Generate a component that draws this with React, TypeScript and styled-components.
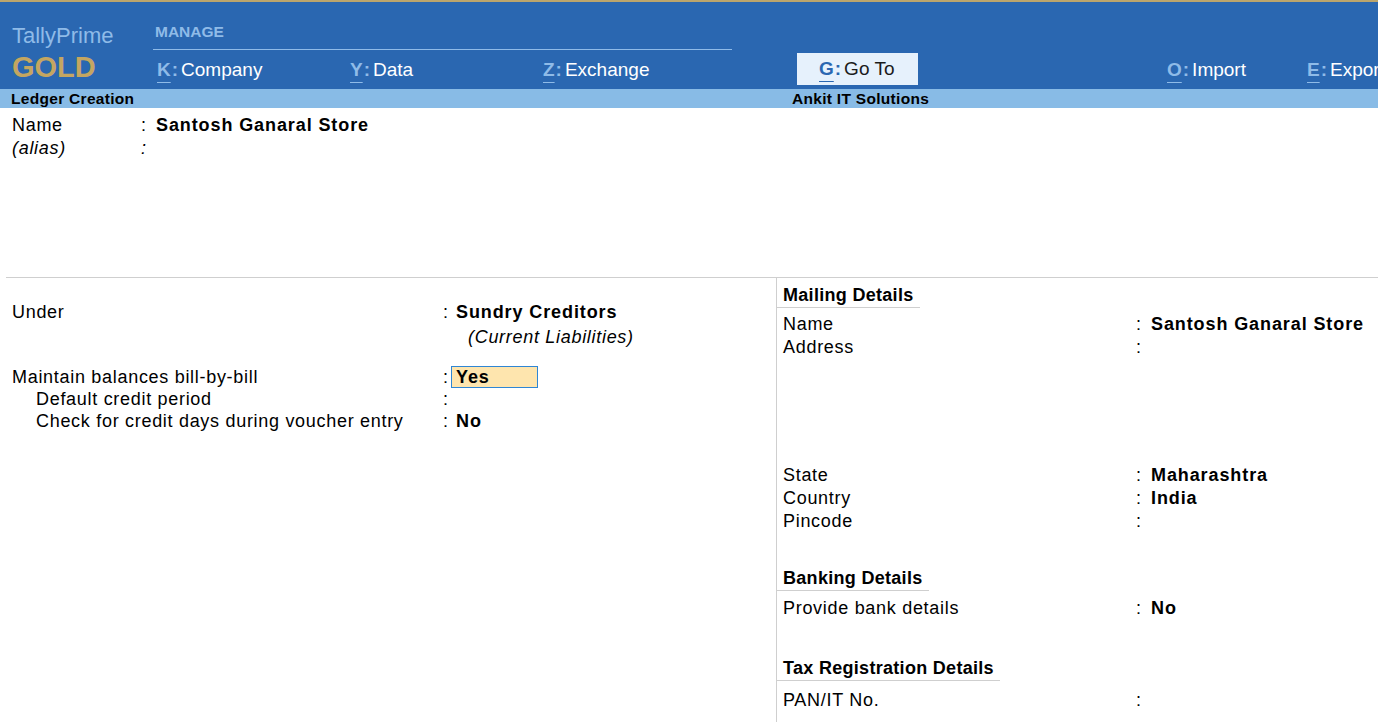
import React from "react";
import styled, { createGlobalStyle } from "styled-components";

const Global = createGlobalStyle`
  html, body { margin: 0; padding: 0; overflow: hidden; background: #fff; }
  body { font-family: "Liberation Sans", Arial, sans-serif; color: #000; }
`;

const Page = styled.div`
  width: 1378px;
  height: 722px;
  overflow: hidden;
  display: flex;
  flex-direction: column;
  background: #fff;
`;

const GoldStripe = styled.div`
  height: 2px;
  background: #bba56c;
  flex: none;
`;

const Header = styled.header`
  height: 87px;
  flex: none;
  background: #2a67b1;
  display: flex;
  white-space: nowrap;
  overflow: hidden;
`;

const Brand = styled.div`
  width: 141px;
  padding: 22px 0 0 12px;
  flex: none;
`;

const BrandName = styled.div`
  font-size: 22px;
  line-height: 24px;
  color: #8fbbe8;
`;

const BrandEdition = styled.div`
  margin-top: 2px;
  font-size: 29px;
  line-height: 34px;
  font-weight: bold;
  color: #c4a661;
`;

const Menu = styled.nav`
  display: flex;
  align-items: flex-end;
`;

const MenuGroup = styled.div`
  width: 579px;
  display: flex;
  flex-direction: column;
`;

const GroupLabel = styled.div`
  padding: 20px 0 7px 2px;
  font-size: 15.5px;
  line-height: 20px;
  font-weight: bold;
  color: #8fbbe8;
  border-bottom: 1px solid #8fbbe8;
`;

const GroupItems = styled.div`
  display: flex;
`;

const MenuItem = styled.div<{ $w: number; $ml?: number; $active?: boolean }>`
  width: ${(p) => p.$w}px;
  margin-left: ${(p) => p.$ml ?? 0}px;
  height: ${(p) => (p.$active ? 32 : 39)}px;
  margin-bottom: ${(p) => (p.$active ? 4 : 0)}px;
  padding-left: ${(p) => (p.$active ? 22 : 4)}px;
  box-sizing: border-box;
  display: flex;
  align-items: center;
  flex: none;
  background: ${(p) => (p.$active ? "#e6f1fc" : "transparent")};
  font-size: 19px;
`;

const Key = styled.span<{ $active?: boolean }>`
  font-weight: bold;
  color: ${(p) => (p.$active ? "#2a67b1" : "#8fbbe8")};
`;

const KeyLetter = styled.span`
  text-decoration: underline;
  text-underline-offset: 6px;
  text-decoration-thickness: 1px;
`;

const KeyColon = styled.span`
  margin: 0 3px 0 1px;
`;

const ItemLabel = styled.span<{ $active?: boolean }>`
  color: ${(p) => (p.$active ? "#1b1b1b" : "#fff")};
`;

const TitleBar = styled.div`
  height: 19px;
  flex: none;
  background: #88bbe6;
  display: flex;
  align-items: center;
  font-size: 15.5px;
  font-weight: bold;
  letter-spacing: 0.3px;
`;

const TitleLeft = styled.div`
  width: 781px;
  padding-left: 11px;
`;

const TitleCompany = styled.div``;

const TopSection = styled.section`
  height: 169px;
  flex: none;
  padding: 6px 0 0 12px;
  box-sizing: border-box;
`;

const Lower = styled.section`
  flex: 1;
  margin-left: 6px;
  border-top: 1px solid #cfcfcf;
  display: flex;
`;

const LeftCol = styled.div`
  width: 770px;
  padding: 23px 0 0 6px;
  box-sizing: border-box;
  flex: none;
`;

const RightCol = styled.div`
  flex: 1;
  border-left: 1px solid #cfcfcf;
`;

const Row = styled.div<{ $h?: number; $mt?: number }>`
  display: flex;
  height: ${(p) => p.$h ?? 23}px;
  line-height: ${(p) => p.$h ?? 23}px;
  margin-top: ${(p) => p.$mt ?? 0}px;
  font-size: 18px;
  letter-spacing: 0.7px;
  white-space: nowrap;
`;

const Label = styled.div<{ $w: number; $indent?: number; $italic?: boolean }>`
  width: ${(p) => p.$w}px;
  padding-left: ${(p) => p.$indent ?? 0}px;
  box-sizing: border-box;
  flex: none;
  font-style: ${(p) => (p.$italic ? "italic" : "normal")};
`;

const Colon = styled.div<{ $w: number; $italic?: boolean }>`
  width: ${(p) => p.$w}px;
  flex: none;
  font-style: ${(p) => (p.$italic ? "italic" : "normal")};
`;

const Value = styled.div`
  padding-left: 5px;
  font-weight: bold;
  letter-spacing: 0.9px;
`;

const FocusValue = styled.div`
  width: 87px;
  height: 22px;
  box-sizing: border-box;
  padding-left: 4px;
  line-height: 20px;
  background: #fee5ae;
  border: 1px solid #2f86d4;
  font-weight: bold;
  letter-spacing: 0.9px;
`;

const SubNote = styled.div`
  padding-left: 456px;
  margin-top: 2px;
  font-size: 18px;
  line-height: 23px;
  font-style: italic;
  letter-spacing: 0.7px;
`;

const SectionHead = styled.div<{ $mt?: number }>`
  display: inline-block;
  margin-top: ${(p) => p.$mt ?? 0}px;
  padding: 6px 6px 1px 6px;
  font-size: 18px;
  line-height: 22px;
  font-weight: bold;
  letter-spacing: 0.3px;
  border-bottom: 1px solid #cfcfcf;
`;

const RightRows = styled.div<{ $mt?: number }>`
  padding-left: 6px;
  margin-top: ${(p) => p.$mt ?? 0}px;
`;

const Block = styled.div``;

type MI = { k: string; label: string; w: number; ml?: number; active?: boolean };

const groupItems: MI[] = [
  { k: "K", label: "Company", w: 193 },
  { k: "Y", label: "Data", w: 193 },
  { k: "Z", label: "Exchange", w: 193 },
];

const otherItems: MI[] = [
  { k: "G", label: "Go To", w: 121, ml: 65, active: true },
  { k: "O", label: "Import", w: 140, ml: 245 },
  { k: "E", label: "Export", w: 140 },
];

const MenuEntry = ({ item }: { item: MI }) => (
  <MenuItem $w={item.w} $ml={item.ml} $active={item.active}>
    <Key $active={item.active}>
      <KeyLetter>{item.k}</KeyLetter>
      <KeyColon>:</KeyColon>
    </Key>
    <ItemLabel $active={item.active}>{item.label}</ItemLabel>
  </MenuItem>
);

const RRow = ({ label, value, mt }: { label: string; value?: string; mt?: number }) => (
  <Row $mt={mt}>
    <Label $w={353}>{label}</Label>
    <Colon $w={10}>:</Colon>
    {value && <Value>{value}</Value>}
  </Row>
);

export default function App() {
  return (
    <Page>
      <Global />
      <GoldStripe />
      <Header>
        <Brand>
          <BrandName>TallyPrime</BrandName>
          <BrandEdition>GOLD</BrandEdition>
        </Brand>
        <Menu>
          <MenuGroup>
            <GroupLabel>MANAGE</GroupLabel>
            <GroupItems>
              {groupItems.map((it) => (
                <MenuEntry key={it.k} item={it} />
              ))}
            </GroupItems>
          </MenuGroup>
          {otherItems.map((it) => (
            <MenuEntry key={it.k} item={it} />
          ))}
        </Menu>
      </Header>
      <TitleBar>
        <TitleLeft>Ledger Creation</TitleLeft>
        <TitleCompany>Ankit IT Solutions</TitleCompany>
      </TitleBar>
      <TopSection>
        <Row>
          <Label $w={129}>Name</Label>
          <Colon $w={10}>:</Colon>
          <Value>Santosh Ganaral Store</Value>
        </Row>
        <Row>
          <Label $w={129} $italic>
            (alias)
          </Label>
          <Colon $w={10} $italic>
            :
          </Colon>
        </Row>
      </TopSection>
      <Lower>
        <LeftCol>
          <Row>
            <Label $w={431}>Under</Label>
            <Colon $w={8}>:</Colon>
            <Value>Sundry Creditors</Value>
          </Row>
          <SubNote>(Current Liabilities)</SubNote>
          <Row $h={22} $mt={17}>
            <Label $w={431}>Maintain balances bill-by-bill</Label>
            <Colon $w={8}>:</Colon>
            <FocusValue>Yes</FocusValue>
          </Row>
          <Row $h={22}>
            <Label $w={431} $indent={24}>
              Default credit period
            </Label>
            <Colon $w={8}>:</Colon>
          </Row>
          <Row $h={22}>
            <Label $w={431} $indent={24}>
              Check for credit days during voucher entry
            </Label>
            <Colon $w={8}>:</Colon>
            <Value>No</Value>
          </Row>
        </LeftCol>
        <RightCol>
          <Block>
            <SectionHead>Mailing Details</SectionHead>
          </Block>
          <RightRows $mt={5}>
            <RRow label="Name" value="Santosh Ganaral Store" />
            <RRow label="Address" />
            <RRow label="State" value="Maharashtra" mt={105} />
            <RRow label="Country" value="India" />
            <RRow label="Pincode" />
          </RightRows>
          <Block>
            <SectionHead $mt={28}>Banking Details</SectionHead>
          </Block>
          <RightRows $mt={6}>
            <RRow label="Provide bank details" value="No" />
          </RightRows>
          <Block>
            <SectionHead $mt={31}>Tax Registration Details</SectionHead>
          </Block>
          <RightRows $mt={8}>
            <RRow label="PAN/IT No." />
          </RightRows>
        </RightCol>
      </Lower>
    </Page>
  );
}
